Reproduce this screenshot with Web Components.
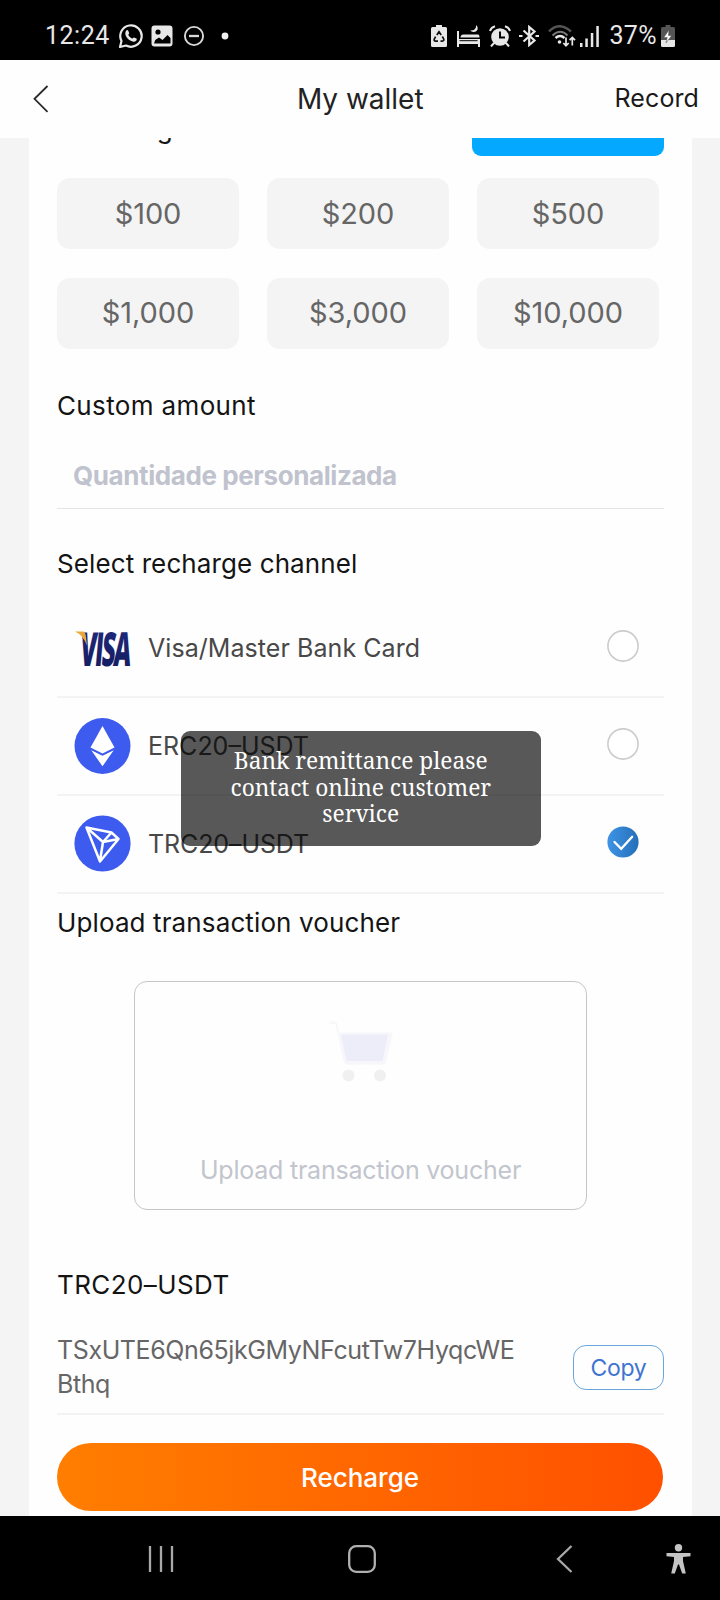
<!DOCTYPE html>
<html lang="en">
<head>
<meta charset="utf-8">
<title>My wallet</title>
<style>
html,body{margin:0;padding:0;background:#f4f4f4}
body{width:720px;height:1600px;overflow:hidden;font-family:Inter,"Liberation Sans",sans-serif}
</style>
</head>
<body>
<wallet-app></wallet-app>
<script>
function define(name, html) {
  const tpl = document.createElement('template');
  tpl.innerHTML = html;
  customElements.define(name, class extends HTMLElement {
    constructor() {
      super();
      this.attachShadow({ mode: 'open' }).appendChild(tpl.content.cloneNode(true));
    }
  });
}

define('status-bar', `
<style>
:host{display:flex;box-sizing:border-box;height:60px;background:#000;color:#e8e8e8;padding:0 45px 0 45px;font:400 25px/28px Roboto,sans-serif;justify-content:space-between}
div{display:flex;align-items:center;height:71px}
svg{display:block;flex:none}
.t{letter-spacing:.5px}
.p{letter-spacing:.4px}
</style>
<div><span class="t">12:24</span>
<svg width="26" height="26" viewBox="0 0 26 26" style="margin-left:8.500px" fill="none" stroke="#e8e8e8" stroke-width="2.200"><path d="M2 24l1.500-6A10.700 10.700 0 1 1 8 22.500z" stroke-linejoin="round"/><path d="M8.200 7.600c.6-.8 1.500-.8 1.900 0l1.100 2.500c.2.500-1 1.500-.8 2 .8 1.700 2 2.700 3.600 3.400.6.200 1.400-1.300 2-1.100l2.400 1.200c.6.300.4 1.300-.1 1.900-1.200 1.400-3 1.500-5 .6-3-1.300-5-3.700-5.800-6.200-.4-1.600 0-3.200.7-4.300z" fill="#e8e8e8" stroke="none"/></svg>
<svg width="22" height="22" viewBox="0 0 22 22" style="margin-left:7px"><rect x=".5" y=".5" width="21" height="21" rx="3" fill="#e8e8e8"/><circle cx="7" cy="7" r="2.600" fill="#000"/><path d="M3 18.500l1.200-3.500 3.800-2.500 3.500 2.500 5-5 3 3v5.500z" fill="#000"/></svg>
<svg width="22" height="22" viewBox="0 0 22 22" style="margin-left:10px" fill="none" stroke="#d8d8d8" stroke-width="1.900"><circle cx="11" cy="11" r="9.100"/><path d="M6 11h10" stroke-width="2.300"/></svg>
<svg width="8" height="8" viewBox="0 0 8 8" style="margin-left:16px"><circle cx="4" cy="4" r="3.400" fill="#f2f2f2"/></svg>
</div>
<div>
<svg width="16" height="22" viewBox="0 0 16 22"><path d="M5 0h6v2h3.500q1.500 0 1.500 1.500v17q0 1.500-1.500 1.500h-13q-1.500 0-1.500-1.500v-17Q0 2 1.500 2H5z" fill="#e8e8e8"/><path d="M5.800 10L8 6.700l2.200 3.300M11.300 11.500l1.500 2.700q.3 1.800-1.500 1.900H9.500M7 16.100H4.500q-1.800-.2-1.200-2l1.300-2.500" fill="none" stroke="#111" stroke-width="1.700"/></svg>
<svg width="23" height="22" viewBox="0 0 23 22" style="margin-left:10px" fill="#e8e8e8"><path d="M0 6h2v8h21v8h-2v-3H2v3H0z"/><path d="M3.500 12.500q0-3 3-3H21q1.500 0 1.500 3z"/><path d="M19 0c3 2.500 2 7-2.500 6.900-1.500 0-2.700-.7-3-1.600 3.700.6 5.900-1.800 5.500-5.300z"/><path d="M2.500 15.700h18" stroke="#000" stroke-width="1"/></svg>
<svg width="22" height="22" viewBox="0 0 22 22" style="margin-left:9px"><circle cx="11" cy="12" r="8.800" fill="#e8e8e8"/><path d="M1 6Q2 2.500 6 1.200M21 6Q20 2.500 16 1.200M5 18l-3 3.500M17 18l3 3.500" stroke="#e8e8e8" stroke-width="2" fill="none"/><path d="M11 6.500V12.500h5" stroke="#000" stroke-width="1.900" fill="none"/></svg>
<svg width="20" height="22" viewBox="0 0 20 22" style="margin-left:8.500px" fill="none" stroke="#e8e8e8" stroke-width="2.200"><path d="M4.500 5.500l11 10L10.200 20V2l5.300 4.500-11 10M0 11h3.500M16.500 11H20"/></svg>
<svg width="28" height="22" viewBox="0 0 28 22" style="margin-left:8.500px" fill="none"><path d="M1 6.500q10-10.500 22 0" stroke="#555" stroke-width="2.400"/><path d="M4.500 10.500q8-7.500 15 0" stroke="#777" stroke-width="2"/><path d="M7.500 13q4.500-4 9 0" stroke="#e8e8e8" stroke-width="2.400"/><circle cx="11.500" cy="17" r="1.800" fill="#e8e8e8"/><path d="M18 12.500v8M15.300 18l2.700 2.700 2.700-2.700M24.300 20.500v-8M21.600 15.200l2.700-2.700 2.700 2.700" stroke="#e8e8e8" stroke-width="1.700"/></svg>
<svg width="19" height="22" viewBox="0 0 19 22" style="margin-left:4.500px" fill="#e8e8e8"><path d="M0 18h2.500v4H0zM5.300 13.500h2.500V22H5.300zM10.800 8h2.500v14h-2.500zM16.300 1h2.500v21h-2.500z"/></svg>
<span class="p" style="margin-left:10px">37%</span>
<svg width="14" height="22" viewBox="0 0 14 22" style="margin-left:4px"><path d="M4.500 0h5v2H12.500q1.500 0 1.500 1.500V15H0V3.500Q0 2 1.500 2h3z" fill="#555"/><path d="M0 15h14v5.500q0 1.500-1.500 1.500h-11Q0 22 0 20.500z" fill="#e8e8e8"/><path d="M8 5L2.700 12.500h3.500L5 18l5.700-7.500H7.500z" fill="#fff" stroke="#444" stroke-width=".5"/></svg>
</div>`);

define('title-bar', `
<style>
:host{display:grid;grid-template-columns:1fr auto 1fr;align-items:center;height:78px;background:#fefefe;padding:0 21px 0 32.500px;color:#222}
svg{display:block}
.m{font-size:28px;line-height:40px;margin-left:-11px;padding-bottom:1px}
.r{font-size:25px;line-height:40px;text-align:right;letter-spacing:.1px;padding-bottom:2px;color:#1a1a1a}
</style>
<svg width="16" height="28" viewBox="0 0 16 28" fill="none" stroke="#2a2a2a" stroke-width="1.800"><path d="M14.500 1L1.500 13.800l13 13"/></svg>
<span class="m"><slot></slot></span>
<span class="r"><slot name="action"></slot></span>`);

define('amount-option', `
<style>
:host{display:flex;align-items:center;justify-content:center;height:71px;border-radius:13px;background:#f4f4f4;color:#666;font-size:29px;letter-spacing:-.1px;box-sizing:border-box;padding-bottom:1px}
</style><slot></slot>`);

define('section-title', `
<style>
:host{display:block;height:40px;font-size:26px;line-height:42px;color:#141414;white-space:nowrap}
</style><slot></slot>`);

define('amount-field', `
<style>
:host{display:block;box-sizing:border-box;height:83.500px;padding:31px 0 0 16px;border-bottom:1px solid #e4e4e6;color:#c0c3cd;font-weight:700;font-size:26px;line-height:40px;letter-spacing:-.41px}
</style><slot></slot>`);

define('channel-row', `
<style>
:host{display:flex;align-items:center;box-sizing:border-box;height:97.700px;border-bottom:2px solid #f3f3f3;padding:0 25px 0 17px;font-size:25px;line-height:40px;color:#484848}
.i{width:57px;height:57px;margin-right:17px}
.t{flex:1}
.r{padding-bottom:4px}
.r svg{display:block}
.r .on{display:none}
:host([checked]) .r .on{display:block}
:host([checked]) .r .off{display:none}
</style>
<span class="i"><slot name="icon"></slot></span>
<span class="t"><slot></slot></span>
<span class="r">
<svg class="off" width="32" height="32" viewBox="0 0 32 32"><circle cx="16" cy="16" r="15.100" fill="#fff" stroke="#ccc" stroke-width="1.600"/></svg>
<svg class="on" width="32" height="32" viewBox="0 0 32 32"><defs><linearGradient id="g"><stop offset="0" stop-color="#3f94e6"/><stop offset="1" stop-color="#256fb9"/></linearGradient></defs><circle cx="16" cy="16" r="15.600" fill="url(#g)"/><path d="M7.500 16l6.700 6.800 11-12" fill="none" stroke="#fff" stroke-width="2.300" stroke-linecap="round"/></svg>
</span>`);

define('visa-logo', `
<style>:host{display:block}svg{display:block;overflow:visible}</style>
<svg width="57" height="57" viewBox="0 0 57 57">
<defs><linearGradient id="v" x1="0" y1="0" x2="0" y2="1"><stop offset="0" stop-color="#232c80"/><stop offset="1" stop-color="#101b5c"/></linearGradient></defs>
<g transform="translate(5 45.500) skewX(-5) scale(.505 1)"><text x="0" y="0" font-family="Open Sans,sans-serif" font-weight="800" font-size="47" textLength="101" fill="url(#v)">VISA</text></g>
<path d="M1 11.500h8.500q2 1 2.500 6l1 8Q9 15 1 11.500z" fill="#e9a93a"/>
</svg>`);

define('erc-logo', `
<style>:host{display:block}svg{display:block}</style>
<svg width="57" height="57" viewBox="0 0 57 57"><circle cx="28.500" cy="28" r="28" fill="#3d5bee"/><path d="M28.500 8L16.500 29.500l12 6 12-6z" fill="#fff"/><path d="M17.300 32.300l11.200 5.400 11.200-5.400L28.500 48.300z" fill="#fff"/></svg>`);

define('trc-logo', `
<style>:host{display:block}svg{display:block}</style>
<svg width="57" height="57" viewBox="0 0 57 57"><circle cx="28.500" cy="28.500" r="28.100" fill="#3d5bee"/><path d="M12.500 12.500l25 5 7 6.500-18.500 22.500zM12.500 12.500l16.500 14.500L26 46M37.500 17.500L29 27l15.500-3" fill="none" stroke="#fff" stroke-width="2.500" stroke-linejoin="round"/></svg>`);

define('upload-box', `
<style>
:host{display:flex;flex-direction:column;align-items:center;box-sizing:border-box;width:453px;height:229.500px;margin:0 auto;border:1px solid #c6c6ca;border-radius:13px;padding-top:37px;color:#c2c5cd}
svg{display:block;margin-left:1px}
span{margin-top:67px;font-size:25px;line-height:40px;letter-spacing:-.22px}
</style>
<svg width="64" height="64" viewBox="0 0 64 64"><path d="M.5 2.500h5q2 0 2.500 2l2 9h52.500q1.500 0 1 2l-6.500 27q-.8 3-4 3H18.500q-3 0-3.800-3L6.500 5H.5z" fill="#f6f6fb"/><path d="M12 15.500H59l-5.500 26.500H17.500z" fill="#ededfa"/><circle cx="19.500" cy="56.500" r="6" fill="#f0f0f0"/><circle cx="51" cy="56.500" r="6" fill="#f0f0f0"/></svg>
<span><slot></slot></span>`);

define('address-row', `
<style>
:host{display:flex;box-sizing:border-box;height:82.500px;border-bottom:2px solid #f3f3f3;justify-content:space-between}
p{margin:0;width:462px;font-size:25px;line-height:34.300px;letter-spacing:-.4px;color:#666;overflow-wrap:anywhere;padding-top:1px}
button{all:unset;box-sizing:border-box;width:91px;height:45px;margin-top:13px;border:1px solid #6aa6dc;border-radius:13px;text-align:center;font-size:23px;line-height:44px;letter-spacing:-.3px;font-weight:400;color:#3f74d0}
</style>
<p><slot></slot></p><button>Copy</button>`);

define('submit-button', `
<style>
:host{display:flex;align-items:center;justify-content:center;width:606px;height:68px;border-radius:34px;background:linear-gradient(90deg,#ff7e00,#ff5000);color:#fff;font-size:26px;font-weight:500}
</style><slot></slot>`);

define('toast-message', `
<style>
:host{display:block;position:absolute;left:180.500px;top:731px;width:360.500px;height:115px;box-sizing:border-box;padding:17px 36px;border-radius:9px;background:rgba(0,0,0,.655);color:#fff;text-align:center;font:400 22.700px/26.700px "Noto Serif","DejaVu Serif Condensed",serif}
</style><slot></slot>`);

define('nav-bar', `
<style>
:host{display:flex;align-items:center;height:84px;background:#000;padding:0 29px 0 148px;justify-content:space-between}
svg{display:block;position:relative;top:1px}
</style>
<svg width="26" height="28" viewBox="0 0 26 28" stroke="#a8a8a8" stroke-width="2.300"><path d="M2 1v26M13 1v26M24 1v26"/></svg>
<svg width="28" height="28" viewBox="0 0 28 28" style="margin-left:29px"><rect x="1.200" y="1.200" width="25.600" height="25.600" rx="7" fill="none" stroke="#b0b0b0" stroke-width="2.300"/></svg>
<svg width="17" height="28" viewBox="0 0 17 28" style="margin-left:34px" fill="none" stroke="#a8a8a8" stroke-width="2.300"><path d="M15.500 1L2 14l13.500 13"/></svg>
<svg width="25" height="30" viewBox="0 0 25 30" style="margin-left:-52px" fill="#c4c4c4"><circle cx="12.500" cy="3.800" r="3.700"/><path d="M.5 9h24v3.300l-7.500.8v4l2.800 12.400h-3.600L13 20.500h-1L8.800 29.500H5.200L8 17.100v-4L.5 12.300z"/></svg>`);

define('wallet-app', `
<style>
:host{display:flex;flex-direction:column;width:720px;height:1600px;position:relative}
main{height:1378px;overflow:hidden;background:#f4f4f4}
.card{display:flex;flex-direction:column;box-sizing:border-box;width:663px;height:1378px;margin-left:29px;padding:0 28px;background:#fefefe}
.head{display:flex;height:18px;justify-content:space-between;align-items:flex-end}
.head section-title{margin:0 0 8px 14px}
.blue{width:192px;height:60px;border-radius:9px;background:#05a8ff}
.grid{display:grid;grid-template-columns:repeat(3,182px);column-gap:28px;row-gap:28.500px;margin:22px 0 36.500px}
</style>
<status-bar></status-bar>
<title-bar>My wallet<span slot="action">Record</span></title-bar>
<main><div class="card">
<div class="head"><section-title>Recharge</section-title><div class="blue"></div></div>
<div class="grid"><amount-option>$100</amount-option><amount-option>$200</amount-option><amount-option>$500</amount-option><amount-option>$1,000</amount-option><amount-option>$3,000</amount-option><amount-option>$10,000</amount-option></div>
<section-title style="letter-spacing:.36px">Custom amount</section-title>
<amount-field>Quantidade personalizada</amount-field>
<section-title style="margin:34.500px 0 17.500px;letter-spacing:.1px">Select recharge channel</section-title>
<channel-row><visa-logo slot="icon"></visa-logo><span style="letter-spacing:.06px">Visa/Master Bank Card</span></channel-row>
<channel-row><erc-logo slot="icon"></erc-logo>ERC20–USDT</channel-row>
<channel-row checked><trc-logo slot="icon"></trc-logo><span style="letter-spacing:-.1px">TRC20–USDT</span></channel-row>
<section-title style="margin:8.500px 0 38.500px;letter-spacing:.12px">Upload transaction voucher</section-title>
<upload-box>Upload transaction voucher</upload-box>
<section-title style="margin:54px 0 28px;letter-spacing:.4px">TRC20–USDT</section-title>
<address-row>TSxUTE6Qn65jkGMyNFcutTw7HyqcWEBthq</address-row>
<submit-button style="margin-top:28.500px">Recharge</submit-button>
</div></main>
<nav-bar></nav-bar>
<toast-message>Bank remittance please contact online customer service</toast-message>`);
</script>
</body>
</html>
